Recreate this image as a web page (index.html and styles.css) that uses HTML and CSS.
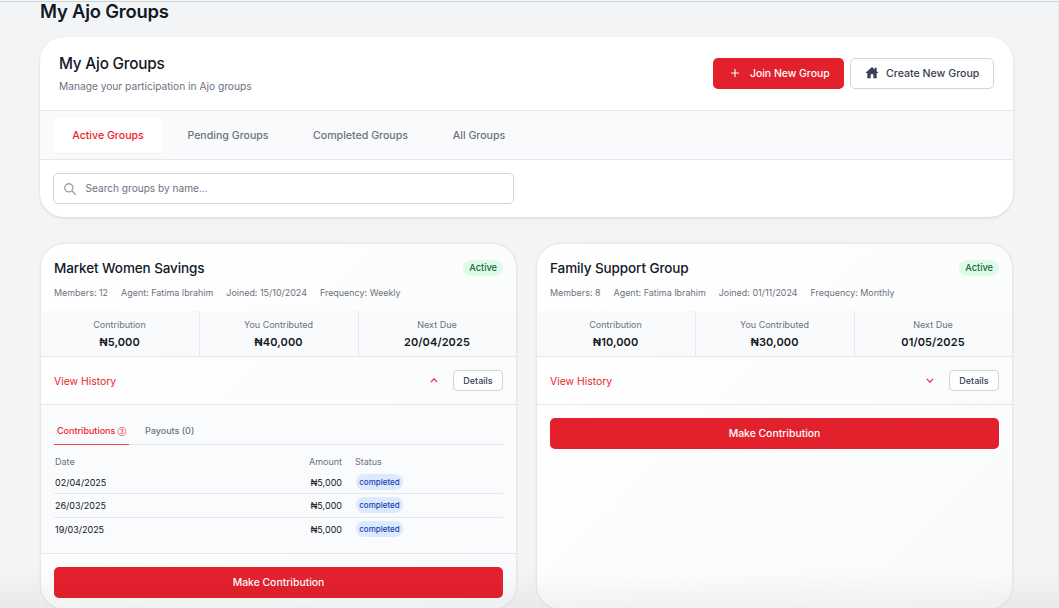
FILE: index.html
```html
<!DOCTYPE html>
<html lang="en">
<head>
<meta charset="utf-8">
<title>My Ajo Groups</title>
<link rel="stylesheet" href="styles.css">
</head>
<body>
<main class="page">
  <h1 class="page-title">My Ajo Groups</h1>
  <section class="panel">
    <div class="panel-head">
      <div>
        <h2 class="panel-title">My Ajo Groups</h2>
        <p class="panel-sub">Manage your participation in Ajo groups</p>
      </div>
      <div class="panel-actions">
        <button class="btn btn-red"><svg class="ic-plus" viewBox="0 0 10 10"><path d="M5 0v10M0 5h10"/></svg>Join New Group</button>
        <button class="btn btn-light"><svg class="ic-home" viewBox="0 0 24 24"><path d="M19 9.3V4h-3v2.6L12 3 2 12h3v8h5v-6h4v6h5v-8h3l-3-2.7z"/></svg>Create New Group</button>
      </div>
    </div>
    <nav class="tabs">
      <a class="tab tab-on">Active Groups</a>
      <a class="tab">Pending Groups</a>
      <a class="tab">Completed Groups</a>
      <a class="tab">All Groups</a>
    </nav>
    <div class="search-row">
      <label class="search">
        <svg class="ic-search" viewBox="0 0 24 24"><circle cx="10" cy="10" r="7"/><path d="M15.5 15.5 22 22"/></svg>
        <span class="search-text">Search groups by name...</span>
      </label>
    </div>
  </section>

  <div class="cards">
    <article class="card">
      <div class="card-head">
        <div class="card-top"><h3 class="card-name">Market Women Savings</h3><span class="pill">Active</span></div>
        <div class="meta"><span>Members: 12</span><span>Agent: Fatima Ibrahim</span><span>Joined: 15/10/2024</span><span>Frequency: Weekly</span></div>
      </div>
      <div class="stats">
        <div class="stat"><span class="stat-label">Contribution</span><strong class="stat-value">₦5,000</strong></div>
        <div class="stat"><span class="stat-label">You Contributed</span><strong class="stat-value">₦40,000</strong></div>
        <div class="stat"><span class="stat-label">Next Due</span><strong class="stat-value">20/04/2025</strong></div>
      </div>
      <div class="history-row">
        <a class="history-link">View History</a>
        <svg class="chev" viewBox="0 0 10 6"><path d="M1 5l4-4 4 4"/></svg>
        <button class="details">Details</button>
      </div>
      <div class="history">
        <div class="subtabs">
          <span class="subtab subtab-on">Contributions <small class="count">③</small></span>
          <span class="subtab">Payouts (0)</span>
        </div>
        <div class="tbl tbl-head"><span class="c-date">Date</span><span class="c-amt">Amount</span><span>Status</span></div>
        <div class="tbl tbl-row tbl-first"><span class="c-date">02/04/2025</span><span class="c-amt">₦5,000</span><span><em class="badge">completed</em></span></div>
        <div class="tbl tbl-row"><span class="c-date">26/03/2025</span><span class="c-amt">₦5,000</span><span><em class="badge">completed</em></span></div>
        <div class="tbl tbl-row tbl-last"><span class="c-date">19/03/2025</span><span class="c-amt">₦5,000</span><span><em class="badge">completed</em></span></div>
      </div>
      <div class="card-foot"><button class="btn-make">Make Contribution</button></div>
    </article>

    <article class="card">
      <div class="card-head">
        <div class="card-top"><h3 class="card-name">Family Support Group</h3><span class="pill">Active</span></div>
        <div class="meta"><span>Members: 8</span><span>Agent: Fatima Ibrahim</span><span>Joined: 01/11/2024</span><span>Frequency: Monthly</span></div>
      </div>
      <div class="stats">
        <div class="stat"><span class="stat-label">Contribution</span><strong class="stat-value">₦10,000</strong></div>
        <div class="stat"><span class="stat-label">You Contributed</span><strong class="stat-value">₦30,000</strong></div>
        <div class="stat"><span class="stat-label">Next Due</span><strong class="stat-value">01/05/2025</strong></div>
      </div>
      <div class="history-row">
        <a class="history-link">View History</a>
        <svg class="chev" viewBox="0 0 10 6"><path d="M1 1l4 4 4-4"/></svg>
        <button class="details">Details</button>
      </div>
      <div class="card-foot"><button class="btn-make">Make Contribution</button></div>
    </article>
  </div>
  <div class="fade"></div>
</main>
</body>
</html>
```
FILE: styles.css
```css
* { box-sizing: border-box; }
html, body { margin: 0; height: 608px; overflow: hidden; }
body {
  background: #f3f4f6;
  font-family: Inter, "Noto Sans", sans-serif;
  color: #111827;
  padding-top: 1px;
}
.page {
  position: relative;
  height: 607px;
  padding: 0 45px 0 40px;
  border-top: 1px solid #d1d5db;
  border-right: 1px solid #e9ebee;
}
.page-title { margin: -1px 0 16px; font-size: 18.4px; line-height: 20px; font-weight: 600; letter-spacing: -0.2px; }
.panel {
  height: 180px;
  background: #fff;
  border-radius: 24px;
  box-shadow: 0 1px 3px rgba(0,0,0,.12);
  margin-bottom: 27px;
  overflow: hidden;
}
.panel-head {
  height: 74px;
  padding: 0 19px;
  display: flex;
  justify-content: space-between;
  align-items: center;
  border-bottom: 1px solid #e5e7eb;
}
.panel-title { margin: 0 0 4px; font-size: 15.3px; line-height: 22px; font-weight: 500; letter-spacing: -0.2px; }
.panel-sub { margin: 0 0 1px; font-size: 10.2px; line-height: 14px; color: #6b7280; }
.panel-actions { display: flex; gap: 6px; margin-top: -1px; }
.btn {
  height: 31px;
  display: flex;
  align-items: center;
  font: 500 10.4px Inter, sans-serif;
  border-radius: 5px;
  padding: 0;
}
.btn-red { width: 131px; padding-left: 18px; gap: 11px; background: #e3212d; color: #fff; border: 0; }
.btn-light { width: 144px; padding-left: 13px; gap: 6px; background: #fff; color: #374151; border: 1px solid #d1d5db; font-size: 10.6px; }
.ic-plus { width: 8px; height: 8px; fill: none; stroke: #fff; stroke-width: 1.4; }
.ic-home { width: 16px; height: 16px; fill: #374151; }
.tabs {
  height: 49px;
  display: flex;
  align-items: center;
  padding: 0 13px;
  background: #f9fafb;
  border-bottom: 1px solid #e5e7eb;
  font-size: 10.6px;
  font-weight: 500;
  color: #6b7280;
}
.tab { display: block; text-align: center; line-height: 35px; height: 35px; }
.tab:nth-child(1) { width: 110px; }
.tab:nth-child(2) { width: 130px; }
.tab:nth-child(3) { width: 135px; }
.tab:nth-child(4) { width: 102px; }
.tab-on { background: #fff; color: #ef1c2b; border-radius: 5px; box-shadow: 0 1px 2px rgba(0,0,0,.05); }
.search-row { padding: 13px; }
.search {
  width: 461px;
  height: 31px;
  display: flex;
  align-items: center;
  gap: 8.5px;
  padding-left: 9px;
  border: 1px solid #d1d5db;
  border-radius: 5px;
  font-size: 10.1px;
  color: #6b7280;
}
.search-text { padding-bottom: 2px; }
.ic-search { width: 14px; height: 14px; fill: none; stroke: #9ca3af; stroke-width: 2.4; }
.cards { display: grid; grid-template-columns: 475px 475px; gap: 21px; padding-left: 1px; height: 365px; }
.card {
  background: linear-gradient(135deg, #fff 0%, #f9fafb 100%);
  border-radius: 24px;
  box-shadow: 0 0 3px rgba(0,0,0,.15);
  overflow: hidden;
}
.card-head { height: 67px; padding: 14px 13px 0; }
.card-top { display: flex; justify-content: space-between; align-items: center; height: 20px; }
.card-name { margin: 0; font-size: 13.5px; font-weight: 500; letter-spacing: -0.1px; }
.pill {
  height: 16px;
  padding: 0 6px;
  border-radius: 8px;
  background: #dcfce7;
  color: #166534;
  font-size: 9.2px;
  font-weight: 500;
  line-height: 16px;
}
.meta { display: flex; gap: 13px; margin-top: 8px; font-size: 8.95px; line-height: 13px; color: #6b7280; }
.stats { display: grid; grid-template-columns: 159px 159px 1fr; height: 46px; background: #f9fafb; border-bottom: 1px solid #e5e7eb; }
.stat { display: flex; flex-direction: column; align-items: center; padding: 8px 1px 0 0; border-right: 1px solid #e5e7eb; }
.stat:last-child { border-right: 0; }
.stat-label { font-size: 9px; line-height: 12px; color: #6b7280; }
.stat-value { font-size: 11px; line-height: 14px; margin-top: 4px; font-weight: 600; color: #111827; letter-spacing: 0.1px; }
.history-row {
  height: 48px;
  display: flex;
  align-items: center;
  padding: 0 13px;
  border-bottom: 1px solid #e5e7eb;
}
.history-link { flex: 1; font-size: 10.4px; color: #ef1c2b; padding-top: 2px; }
.chev { width: 8px; height: 5px; fill: none; stroke: #ef1c2b; stroke-width: 1.4; margin-right: 15px; }
.details {
  width: 50px;
  height: 21px;
  padding: 0;
  background: #fff;
  border: 1px solid #d1d5db;
  border-radius: 4px;
  font: 500 9px Inter, sans-serif;
  color: #374151;
  margin-top: -1px;
}
.history { height: 149px; padding: 13px 13px 0; background: #fafbfd; border-bottom: 1px solid #e5e7eb; }
.subtabs { display: flex; height: 27px; border-bottom: 1px solid #e5e7eb; font-size: 9px; color: #6b7280; }
.subtab { padding: 7px 3px 0; height: 27px; margin-right: 13px; font-weight: 500; white-space: nowrap; }
.subtab-on { color: #ef1c2b; border-bottom: 1px solid #ef4444; width: 75px; }
.count { font-size: 6px; }
.tbl { display: flex; align-items: center; font-size: 9px; }
.tbl-head { height: 23px; color: #6b7280; padding-top: 9px; }
.tbl-row { height: 23.5px; color: #111827; border-bottom: 1px solid #e5e7eb; }
.tbl-first { height: 26px; padding-top: 3px; }
.tbl-last { border-bottom: 0; }
.c-date { width: 242px; padding-left: 1px; }
.c-amt { width: 46px; text-align: right; margin-right: 13px; }
.badge {
  display: inline-block;
  height: 16px;
  width: 47px;
  margin-left: 1px;
  text-align: center;
  line-height: 16px;
  border-radius: 8px;
  background: #dbeafe;
  color: #1e40af;
  font-style: normal;
  font-weight: 500;
  font-size: 8px;
}
.card-foot { padding: 13px; }
.btn-make {
  display: block;
  width: 100%;
  height: 31px;
  padding: 0;
  border: 0;
  border-radius: 5px;
  background: #e3212d;
  color: #fff;
  font: 500 10.4px Inter, sans-serif;
}
.fade {
  position: absolute;
  left: 0;
  right: 0;
  bottom: 0;
  height: 38px;
  background: linear-gradient(to bottom, rgba(0,0,0,0), rgba(0,0,0,.045));
  pointer-events: none;
}
```
